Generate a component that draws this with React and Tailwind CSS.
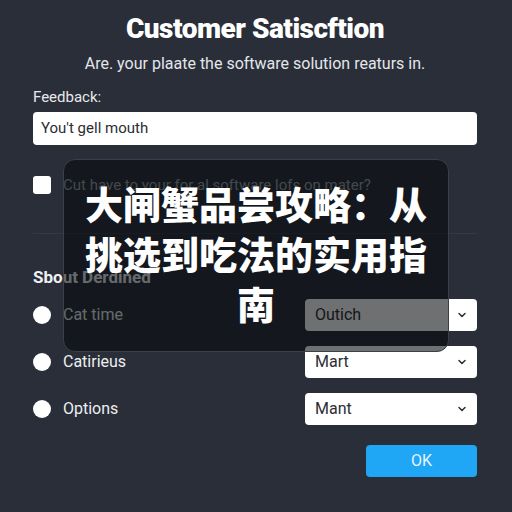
import { ChevronDown } from "lucide-react";

const rows = [
  { label: "Cat time", value: "Outich" },
  { label: "Catirieus", value: "Mart" },
  { label: "Options", value: "Mant" },
];

export default function App() {
  return (
    <div
      className="relative w-[512px] h-[512px] overflow-hidden bg-[#292e39] text-white"
      style={{ fontFamily: "Roboto, 'Noto Sans', sans-serif" }}
    >
      <div className="pl-[33px] pr-[35px] pt-[13px]">
        <h1 className="text-center text-[28px] font-black leading-[32px] tracking-[-0.5px]">
          Customer Satiscftion
        </h1>
        <p className="mt-[9px] text-center text-[16px] leading-[20px] text-[#e4e6ea]">
          Are. your plaate the software solution reaturs in.
        </p>
        <div className="mt-[13px] text-[15px] leading-[20px] text-[#e8e9ec]">Feedback:</div>
        <div className="mt-[5px] h-[33px] rounded-[4px] bg-white flex items-center px-[8px] text-[15px] text-[#2a2d33]">
          You't gell mouth
        </div>
        <div className="mt-[29px] flex items-center gap-[12px]">
          <div className="w-[18px] h-[18px] rounded-[3px] bg-white" />
          <span className="text-[15px] text-[#9aa0a8]">Cut have to your for al software lofs on mater?</span>
        </div>
        <div className="mt-[36px] h-px bg-[#343a45]" />
        <div className="mt-[33px] text-[17px] font-bold leading-[20px] text-[#eef0f3]">Sbout Derdined</div>
        <div className="mt-[12px] flex flex-col gap-[15px]">
          {rows.map((r) => (
            <div key={r.label} className="flex items-center justify-between">
              <div className="flex items-center gap-[12px]">
                <div className="w-[18px] h-[18px] rounded-full bg-white" />
                <span className="text-[16px] text-[#eceef1]">{r.label}</span>
              </div>
              <div className="w-[172px] h-[32px] rounded-[4px] bg-white flex items-center justify-between pl-[10px] pr-[9px] text-[16px] text-[#2b2e34]">
                <span>{r.value}</span>
                <ChevronDown className="w-[12px] h-[12px]" strokeWidth={3} />
              </div>
            </div>
          ))}
        </div>
        <div className="mt-[20px] flex justify-end">
          <button className="w-[111px] h-[32px] rounded-[4px] bg-[#1fa6f5] text-[16px] text-[#e6f4ff]">OK</button>
        </div>
      </div>

      <div className="absolute left-[63px] top-[159px] w-[386px] h-[193px] rounded-[12px] bg-[rgba(6,8,11,0.58)] border border-[#3a3f48] flex items-center justify-center px-[14px] pb-[5px]">
        <p
          className="text-center text-[38px] font-black leading-[50px] text-white"
          style={{ fontFamily: "'Noto Sans CJK SC', sans-serif" }}
        >
          大闸蟹品尝攻略：从挑选到吃法的实用指南
        </p>
      </div>
    </div>
  );
}
